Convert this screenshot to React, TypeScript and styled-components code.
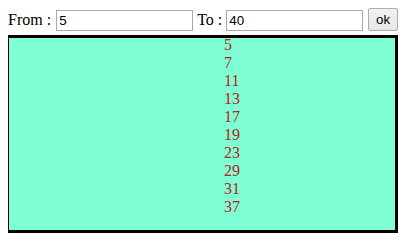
import React from 'react';
import styled, { createGlobalStyle } from 'styled-components';

const GlobalStyle = createGlobalStyle`
  body {
    margin: 8px;
    background: #ffffff;
    font-family: "Liberation Serif", "Times New Roman", serif;
    font-size: 16px;
    color: #000000;
  }
`;

const Toolbar = styled.div`
  display: flex;
  align-items: flex-end;
  height: 23px;
`;

const Label = styled.span<{ $lead?: number; $trail?: number }>`
  line-height: 18px;
  margin: 0 ${({ $trail }) => $trail ?? 4}px 2px ${({ $lead }) => $lead ?? 0}px;
  white-space: pre;
`;

const NumberInput = styled.input`
  box-sizing: border-box;
  width: 137px;
  height: 21px;
  padding: 1px 2px;
  border: 1px solid #a9a9a9;
  font-family: "Liberation Sans", Arial, sans-serif;
  font-size: 13.33px;
  color: #000000;
  background: #ffffff;
  outline: none;
`;

const OkButton = styled.button`
  box-sizing: border-box;
  width: 31px;
  height: 23px;
  margin-left: 5px;
  padding: 0;
  border: 1px solid #adadad;
  border-radius: 2px;
  background: linear-gradient(#f2f2f2, #e6e6e6);
  font-family: "Liberation Sans", Arial, sans-serif;
  font-size: 13.33px;
  color: #000000;
`;

const ResultBox = styled.div`
  box-sizing: border-box;
  width: 392px;
  margin: 4px 0 0 -2px;
  border: 3px solid #000000;
  background: #7fffd4;
  padding: 0 0 14px 215px;
`;

const PrimeList = styled.div`
  margin-top: -2px;
  color: #b22222;
  line-height: 18px;
`;

const Prime = styled.div``;

function primesBetween(from: number, to: number) {
  const out: number[] = [];
  for (let n = Math.max(2, from); n < to; n++) {
    let ok = true;
    for (let d = 2; d * d <= n; d++) {
      if (n % d === 0) {
        ok = false;
        break;
      }
    }
    if (ok) out.push(n);
  }
  return out;
}

export default function App() {
  const [from, setFrom] = React.useState('5');
  const [to, setTo] = React.useState('40');
  const [range, setRange] = React.useState({ from: 5, to: 40 });

  const primes = primesBetween(range.from, range.to);

  return (
    <>
      <GlobalStyle />
      <Toolbar>
        <Label $trail={5}>From :</Label>
        <NumberInput value={from} onChange={(e) => setFrom(e.target.value)} />
        <Label $lead={4} $trail={4}>To :</Label>
        <NumberInput value={to} onChange={(e) => setTo(e.target.value)} />
        <OkButton onClick={() => setRange({ from: Number(from), to: Number(to) })}>ok</OkButton>
      </Toolbar>
      <ResultBox>
        <PrimeList>
          {primes.map((p) => (
            <Prime key={p}>{p}</Prime>
          ))}
        </PrimeList>
      </ResultBox>
    </>
  );
}
